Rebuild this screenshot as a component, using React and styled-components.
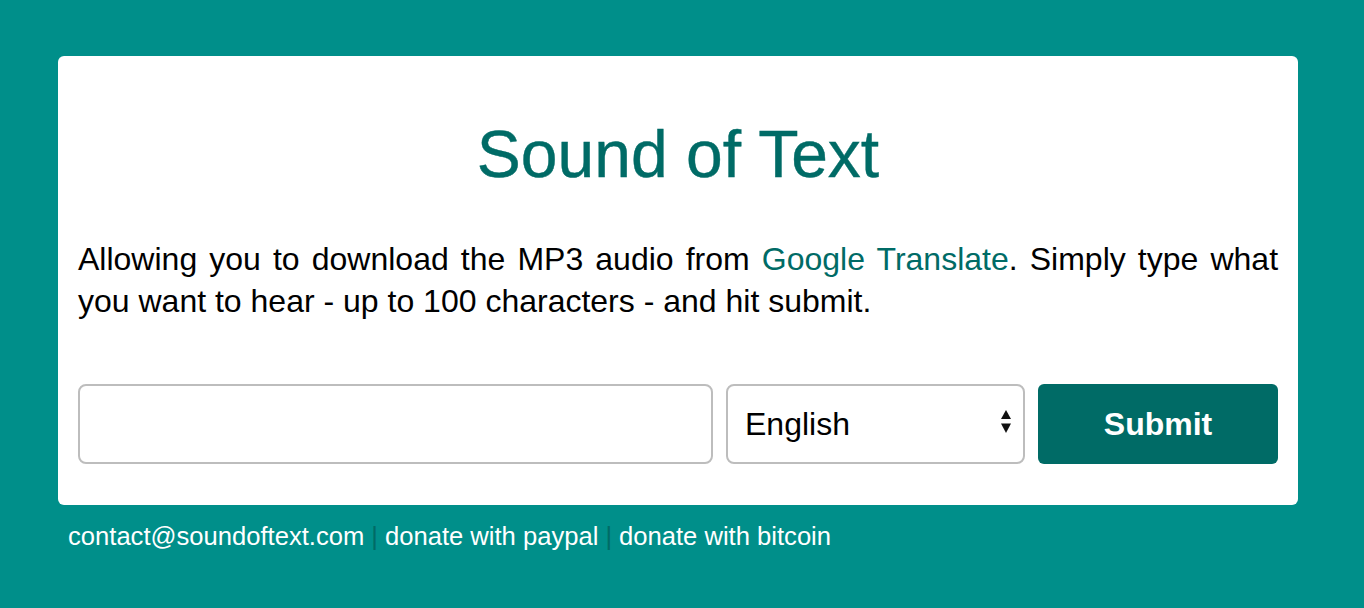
import styled, { createGlobalStyle } from 'styled-components';

const GlobalStyle = createGlobalStyle`
  html, body {
    margin: 0;
    padding: 0;
    background: #008f8a;
    font-family: 'Liberation Sans', Arial, Helvetica, sans-serif;
  }
  * {
    box-sizing: border-box;
  }
`;

export default function App() {
  return (
    <>
      <GlobalStyle />
      <Page>
        <Card>
          <Title>Sound of Text</Title>
          <Intro>
            Allowing you to download the MP3 audio from{' '}
            <Link href='#'>Google Translate</Link>. Simply type what you want
            to hear - up to 100 characters - and hit submit.
          </Intro>
          <Form onSubmit={(e) => e.preventDefault()}>
            <TextInput type='text' aria-label='Text' />
            <SelectWrap>
              <Select defaultValue='en-US' aria-label='Language'>
                <option value='en-US'>English</option>
              </Select>
              <SelectArrows aria-hidden='true' viewBox='0 0 10 23'>
                <path d='M5 0 L10 9 L0 9 Z' fill='#111' />
                <path d='M5 23 L10 13.5 L0 13.5 Z' fill='#111' />
              </SelectArrows>
            </SelectWrap>
            <SubmitButton type='submit'>Submit</SubmitButton>
          </Form>
        </Card>
        <Footer>
          <FooterLink href='#'>contact@soundoftext.com</FooterLink>
          <Divider>|</Divider>
          <FooterLink href='#'>donate with paypal</FooterLink>
          <Divider>|</Divider>
          <FooterLink href='#'>donate with bitcoin</FooterLink>
        </Footer>
      </Page>
    </>
  );
}

// styles
const Page = styled.div`
  min-height: 608px;
  padding: 56px 66px 0 58px;
`;
const Card = styled.section`
  background: #fff;
  border-radius: 6px;
  padding: 20px;
`;
const Title = styled.h1`
  margin: 41px 0 47px;
  font-size: 66px;
  line-height: 74px;
  font-weight: normal;
  text-align: center;
  color: #006b66;
  -webkit-text-stroke: 0.4px #006b66;
`;
const Intro = styled.p`
  margin: 0 0 62px;
  font-size: 32px;
  line-height: 42px;
  text-align: justify;
  color: #000;
`;
const Link = styled.a`
  color: #006b66;
  text-decoration: none;
`;
const Form = styled.form`
  display: flex;
  gap: 13px;
  height: 80px;
  margin-bottom: 21px;
`;
const TextInput = styled.input`
  flex: 0 0 635px;
  height: 80px;
  border: 2px solid #bdbdbd;
  border-radius: 8px;
  padding: 0 17px;
  font-family: inherit;
  font-size: 32px;
  outline: none;
`;
const SelectWrap = styled.div`
  position: relative;
  flex: 0 0 299px;
`;
const Select = styled.select`
  appearance: none;
  width: 100%;
  height: 80px;
  border: 2px solid #bdbdbd;
  border-radius: 8px;
  padding: 0 40px 0 17px;
  background: #fff;
  font-family: inherit;
  font-size: 32px;
  color: #000;
  outline: none;
`;
const SelectArrows = styled.svg`
  position: absolute;
  right: 14px;
  top: 26px;
  width: 10px;
  height: 23px;
  pointer-events: none;
`;
const SubmitButton = styled.button`
  flex: 1;
  height: 80px;
  border: none;
  border-radius: 6px;
  background: #006b66;
  color: #fff;
  font-family: inherit;
  font-size: 32px;
  font-weight: bold;
  cursor: pointer;
`;
const Footer = styled.footer`
  padding: 16px 10px;
  font-size: 25.6px;
  line-height: 30px;
  color: #fff;
`;
const FooterLink = styled.a`
  color: #fff;
  text-decoration: none;
`;
const Divider = styled.span`
  color: #006b66;
  margin: 0 7px;
`;
